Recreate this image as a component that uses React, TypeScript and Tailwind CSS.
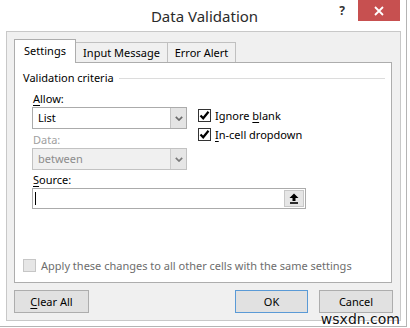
import React from "react";

const Check = () => (
  <svg width="11" height="11" viewBox="0 0 11 11" className="block">
    <path d="M1.5 5.5 L4.2 8.3 L9.5 1.8" fill="none" stroke="#000" strokeWidth="2.2" />
  </svg>
);

const Chevron = ({ color = "#6a6a6a" }: { color?: string }) => (
  <svg width="8" height="5" viewBox="0 0 8 5" className="block">
    <path d="M0.8 0.8 L4 4 L7.2 0.8" fill="none" stroke={color} strokeWidth="1.7" />
  </svg>
);

export default function App() {
  return (
    <div
      className="relative w-[410px] h-[328px] bg-white overflow-hidden text-[11px] text-black"
      style={{ fontFamily: '"Noto Sans", "Open Sans", sans-serif' }}
    >
      <div className="w-[407px] h-[327px] border-r border-b border-[#b4b4b4] flex flex-col">
        {/* title bar */}
        <div className="h-[31px] grid grid-cols-[1fr_auto_1fr] pr-[6px]">
          <div />
          <div className="pt-[5px] text-[15px] leading-[22px] text-[#2b2b2b] pl-[9px]">Data Validation</div>
          <div className="flex justify-end items-start">
            <div className="mr-[13px] pt-[3px] text-[12px] font-bold leading-[16px] text-[#333]">?</div>
            <div className="w-[42px] h-[21px] bg-[#c75050] flex items-center justify-center">
              <svg width="10" height="10" viewBox="0 0 10 10" className="block">
                <path d="M1 1 L9 9 M9 1 L1 9" stroke="#fff" strokeWidth="1.8" />
              </svg>
            </div>
          </div>
        </div>
        {/* client area */}
        <div className="ml-[6px] w-[395px] h-[290px] border border-[#c8c8c8] bg-[#f0f0f0] flex flex-col px-[7px] pt-[7px]">
          {/* tabs */}
          <div className="flex items-end h-[23px]">
            <div className="relative z-10 w-[62px] h-[24px] -mb-px bg-white border-t border-l border-r border-[#adadad] flex items-start justify-center pt-[3px] leading-[16px]">
              Settings
            </div>
            <div className="-ml-px w-[93px] h-[20px] bg-[#f0f0f0] border border-[#c0c0c0] border-b-0 flex items-center justify-center leading-[16px]">
              Input Message
            </div>
            <div className="-ml-px w-[69px] h-[20px] bg-[#f0f0f0] border border-[#c0c0c0] border-b-0 flex items-center justify-center leading-[16px]">
              Error Alert
            </div>
          </div>
          {/* panel */}
          <div className="w-[378px] h-[221px] border border-[#adadad] bg-white flex flex-col pl-[8px] pt-[7px] pb-[10px]">
            <div className="flex items-center h-[16px] leading-[16px]">
              <span>Validation criteria</span>
              <div className="flex-1 h-px bg-[#dcdcdc] ml-[5px] mr-[6px]" />
            </div>
            <div className="pl-[9px] mt-[5px] flex flex-col">
              <div className="flex">
                <div className="w-[155px] flex flex-col">
                  <div className="h-[16px] leading-[16px] pl-[1px]">
                    <span className="underline underline-offset-2">A</span>llow:
                  </div>
                  <div className="h-[22px] border border-[#ababab] bg-white flex">
                    <div className="flex-1 pl-[5px] leading-[20px]">List</div>
                    <div className="w-[16px] bg-[#e4e4e4] border-l border-[#c4c4c4] flex items-center justify-center">
                      <Chevron />
                    </div>
                  </div>
                  <div className="mt-[3px] h-[16px] leading-[16px] pl-[1px] text-[#a0a0a0]">Data:</div>
                  <div className="h-[22px] border border-[#c2c2c2] bg-[#f0f0f0] flex">
                    <div className="flex-1 pl-[5px] leading-[20px] text-[#8c8c8c]">between</div>
                    <div className="w-[16px] bg-[#e6e6e6] border-l border-[#cccccc] flex items-center justify-center">
                      <Chevron color="#7a7a7a" />
                    </div>
                  </div>
                </div>
                <div className="ml-[11px] pt-[18px] flex flex-col gap-[6px]">
                  <div className="flex items-center h-[13px]">
                    <div className="w-[13px] h-[13px] border border-[#333] bg-white flex items-center justify-center">
                      <Check />
                    </div>
                    <span className="ml-[4px] leading-[16px]">
                      Ignore <span className="underline underline-offset-2">b</span>lank
                    </span>
                  </div>
                  <div className="flex items-center h-[13px]">
                    <div className="w-[13px] h-[13px] border border-[#333] bg-white flex items-center justify-center">
                      <Check />
                    </div>
                    <span className="ml-[4px] leading-[16px]">
                      <span className="underline underline-offset-2">I</span>n-cell dropdown
                    </span>
                  </div>
                </div>
              </div>
              <div className="mt-[2px] h-[16px] leading-[16px] pl-[1px]">
                <span className="underline underline-offset-2">S</span>ource:
              </div>
              <div className="w-[274px] h-[21px] border border-[#ababab] bg-white flex items-stretch">
                <div className="flex-1 flex items-center pl-[2px]">
                  <div className="w-px h-[13px] bg-black" />
                </div>
                <div className="w-[20px] my-[1px] mr-[1px] bg-[#e6e6e6] border border-[#c8c8c8] flex items-center justify-center">
                  <svg width="10" height="11" viewBox="0 0 10 11" className="block">
                    <path d="M5 0.5 L9.5 5 L6.5 5 L6.5 8 L3.5 8 L3.5 5 L0.5 5 Z" fill="#000" />
                    <rect x="1" y="9.2" width="8" height="1.6" fill="#000" />
                  </svg>
                </div>
              </div>
            </div>
            <div className="mt-auto flex items-center h-[13px]">
              <div className="w-[13px] h-[13px] border border-[#c6c6c6] bg-[#e6e6e6]" />
              <span className="ml-[5px] leading-[16px] text-[#6d6d6d]">
                Apply these changes to all other cells with the same settings
              </span>
            </div>
          </div>
          {/* buttons */}
          <div className="mt-[7px] flex">
            <div className="w-[75px] h-[23px] bg-[#e1e1e1] border border-[#adadad] flex items-center justify-center leading-[16px]">
              <span>
                <span className="underline underline-offset-2">C</span>lear All
              </span>
            </div>
            <div className="ml-auto w-[73px] h-[23px] bg-[#e1e1e1] border border-[#5a9ad6] flex items-center justify-center leading-[16px]">
              OK
            </div>
            <div className="ml-[11px] w-[74px] h-[23px] bg-[#e1e1e1] border border-[#adadad] flex items-center justify-center leading-[16px]">
              Cancel
            </div>
          </div>
        </div>
      </div>
      <div
        className="absolute right-[10px] bottom-[1px] text-[14px] leading-[16px] text-[#111]"
        style={{ fontFamily: '"DejaVu Sans", sans-serif', textShadow: "0 0 2px #fff, 0 0 2px #fff" }}
      >
        wsxdn.com
      </div>
    </div>
  );
}
